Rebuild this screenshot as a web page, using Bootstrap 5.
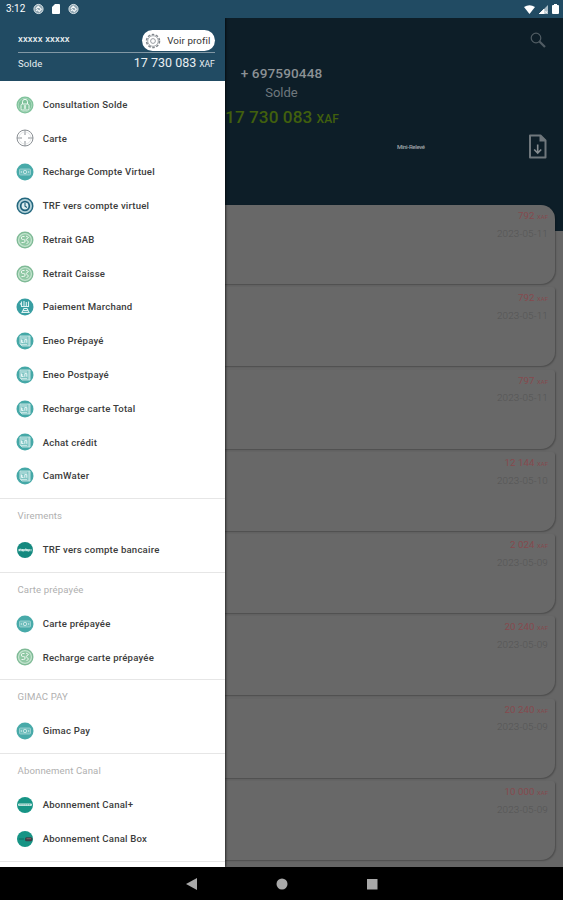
<!DOCTYPE html>
<html lang="fr">
<head>
<meta charset="utf-8">
<meta name="viewport" content="width=device-width, initial-scale=1">
<title>Compte</title>
<link href="https://cdn.jsdelivr.net/npm/bootstrap@5.3.0/dist/css/bootstrap.min.css" rel="stylesheet">
<style>
body{font-family:Roboto,"Noto Sans",sans-serif;height:900px;overflow:hidden;background:#666;line-height:1}
svg{display:block;flex:none}
.statusbar{height:18px;background:#214b63;padding:0 4px 0 6px;font-size:10px}
.screen{height:849px;overflow:hidden}
.hero{height:213px;background:#0d1e28;color:#8b9195}
.phone{font-size:13.6px;font-weight:500;letter-spacing:.1px;margin-top:49px}
.hero-label{font-size:13px;margin-top:5px;color:#6f787e}
.amount{font-size:17.2px;font-weight:500;color:#41600d;margin-top:10px;letter-spacing:.05px;padding-left:1px}
.amount small{font-size:12px}
.tools{padding:0 16px 0 397px;margin-top:8px}
.tiny{font-size:6px;font-weight:500;letter-spacing:-.35px;color:#a0a5a8;padding-top:2px}
.lookup{top:14px;right:17px}
.entries{margin-top:-26px;gap:3.25px;padding-right:8px}
.entry{height:79px;background:#686868;border-radius:0 3px 14px 0;padding:6px 7px 0 0;box-shadow:.5px 1px 1.5px rgba(0,0,0,.25)}
.entry:first-child{border-top-right-radius:14px}
.debit{font-size:9.8px;color:#854a4e}
.debit small{font-size:6px}
.day{font-size:9.8px;color:#555;margin-top:8px;font-weight:300;letter-spacing:.2px}
.drawer{top:0;left:0;width:225px;height:849px;background:#fff;box-shadow:1px 0 2px rgba(0,0,0,.6);overflow:hidden}
.drawer-head{height:63px;background:#214b63;color:#e9eff2;padding:12px 10.5px 0 18px}
.user{font-size:9.5px;font-weight:500;letter-spacing:.15px}
.profile{height:21px;width:73px;background:#fff;color:#333;font-size:9.8px;letter-spacing:.1px;padding:0 4px 0 3px}
.head-line{border-top:1px solid #8298a5;margin-top:1px}
.solde{font-size:9.5px;letter-spacing:.1px}
.total{font-size:12.5px;letter-spacing:0}
.total small{font-size:8.6px;letter-spacing:-.2px}
.menu{padding-top:6.8px}
.entry-link{height:33.78px;padding-left:15.5px;gap:9.2px;font-size:9.6px;font-weight:500;letter-spacing:.2px;color:#3c3c3c}
.group-label{height:33.78px;padding-left:17.5px;font-size:9.6px;letter-spacing:.12px;color:#b0b0b0}
.rule{height:6.2px;border-bottom:1px solid #e6e6e6}
.navbar-keys{height:33px;background:#000}
</style>
<script src="https://cdn.jsdelivr.net/npm/bootstrap@5.3.0/dist/js/bootstrap.bundle.min.js"></script>
</head>
<body>
<svg width="0" height="0" class="position-absolute">
<defs>
<symbol id="i-lock" viewBox="0 0 18 18"><circle cx="9" cy="9" r="8.5" fill="#7fc29b"/><circle cx="9" cy="9" r="6.8" fill="none" stroke="#b9dfc8" stroke-width=".7"/><g fill="none" stroke="#effaf3" stroke-width="1"><path d="M6.5 8V5.800a2.500 2.500 0 0 1 5 0V8"/><rect x="5" y="8" width="8" height="6" rx="1.5"/><path d="M9 9.300v3.400M7.800 10h2.400M7.800 12h2.400"/></g></symbol>
<symbol id="i-target" viewBox="0 0 18 18"><g fill="none" stroke="#8b9095" stroke-width="1"><circle cx="9" cy="9" r="8"/><path d="M9 1v5M9 12v5M1 9h5M12 9h5"/><circle cx="9" cy="9" r="6" stroke="#d4d6d8" stroke-width=".6"/></g></symbol>
<symbol id="i-note" viewBox="0 0 18 18"><circle cx="9" cy="9" r="8.5" fill="#48aaa9"/><rect x="3.5" y="6" width="11" height="6" rx="1" fill="#6dbdbb" stroke="#a4d6d5" stroke-width=".8"/><circle cx="9" cy="9" r="1.7" fill="none" stroke="#d5eeee" stroke-width=".8"/><path d="M5.300 8v2M12.700 8v2" stroke="#d5eeee" stroke-width=".8"/></symbol>
<symbol id="i-clock" viewBox="0 0 18 18"><circle cx="9" cy="9" r="8.5" fill="#23677e"/><circle cx="9" cy="9" r="7" fill="#b4d3da"/><circle cx="9" cy="9" r="4.3" fill="#dceef0" stroke="#1c5f79" stroke-width="1.7"/><path d="M9 6v3.300l2 1.200" fill="none" stroke="#1c5f79" stroke-width="1.1"/></symbol>
<symbol id="i-coin" viewBox="0 0 18 18"><circle cx="9" cy="9" r="7.8" fill="#c4e4cf" stroke="#7fba96" stroke-width="1.4"/><circle cx="9" cy="9" r="5.8" fill="#8fc8a4"/><g fill="none" stroke="#eef8f1" stroke-width="1"><path d="M8.500 5.500H6.800a1.500 1.500 0 0 0 0 3h.8a1.500 1.500 0 0 1 0 3H5.500M10 5l2.500 1.500-2.500 2 2.500 2.500-2 2"/></g></symbol>
<symbol id="i-shop" viewBox="0 0 18 18"><circle cx="9" cy="9" r="8.5" fill="#389ea2"/><g fill="none" stroke="#dff2f2" stroke-width="1.1"><path d="M5.500 3.500v5h7v-5M8 3v5M10.300 4v4M6 14.500l2-4h3l2 4zM7 12.600h5M4 5.500l2 1.500"/></g></symbol>
<symbol id="i-bill" viewBox="0 0 18 18"><circle cx="9" cy="9" r="8.5" fill="#45a8a7"/><g fill="none" stroke="#c9e8e7" stroke-width=".9"><path d="M4 4h10v10H6l-2-2z" fill="#80c5c3"/><path d="M13 4v10M5 6h6M5 12.500h6"/><path d="M5.500 7.500v3h2M5.500 9h1.600M8.800 10.800V7.600h2v3.200" stroke="#f0fafa"/></g></symbol>
<symbol id="i-bank" viewBox="0 0 18 18"><circle cx="9" cy="9" r="8" fill="#14897f"/><path d="M1.800 8h14.400v2.300H1.800z" fill="#6db8b1"/><path d="M3.500 10V8.200h1.700V10M6.500 8v2h1.300V8m1.200 2V8h1.400v2m1.300-2v2h1.400V8" fill="none" stroke="#e6f5f3" stroke-width=".8"/></symbol>
<symbol id="i-canal" viewBox="0 0 18 18"><circle cx="9" cy="9" r="8" fill="#169485"/><rect x="2" y="7.400" width="14" height="2.600" rx="1.200" fill="#cae9e4"/><path d="M3.500 8.800h11" stroke="#489e95" stroke-width=".8" stroke-dasharray="1.2 .7"/></symbol>
<symbol id="i-box" viewBox="0 0 18 18"><circle cx="9" cy="9" r="8" fill="#169485"/><path d="M3 9h5" stroke="#116b62"/><rect x="9" y="7.200" width="7.400" height="4" rx="1.500" fill="#3c4148"/><path d="M10.500 8.700h4.500" stroke="#a06b70" stroke-width=".8"/></symbol>
<symbol id="i-app" viewBox="0 0 12 12"><circle cx="6" cy="6" r="5" fill="#8ba2af" stroke="#e5ecef"/><path d="M3.500 5.200 5.700 3 9 6.200 6.800 8.600zM3.200 8l2-1.500" fill="none" stroke="#f4f7f8" stroke-width="1.2"/></symbol>
</defs>
</svg>

<header class="statusbar d-flex align-items-center justify-content-between text-white">
  <div class="d-flex align-items-center">
    <span>3:12</span>
    <svg class="ms-2" width="11" height="12"><use href="#i-app"/></svg>
    <svg class="ms-2" width="8" height="10" viewBox="0 0 8 10"><path d="M3 0h4a1 1 0 0 1 1 1v8a1 1 0 0 1-1 1H1a1 1 0 0 1-1-1V3z" fill="#fff"/></svg>
    <svg class="ms-2" width="11" height="12"><use href="#i-app"/></svg>
  </div>
  <div class="d-flex align-items-center gap-1">
    <svg width="11" height="9" viewBox="0 0 11 9"><path d="M0 2Q5.500-1.600 11 2L5.500 9z" fill="#fff"/></svg>
    <svg width="9" height="9" viewBox="0 0 9 9"><path d="M0 9 9 0v9z" fill="#a9bbc5"/><path d="M0 9 5 4v5zM6.300 6.200l2 2m0-2-2 2" fill="#fff" stroke="#fff" stroke-width=".8"/></svg>
    <svg width="7" height="10" viewBox="0 0 7 10"><path d="M2 0h3v1h1a1 1 0 0 1 1 1v7a1 1 0 0 1-1 1H1a1 1 0 0 1-1-1V2a1 1 0 0 1 1-1h1z" fill="#fff"/></svg>
  </div>
</header>

<main class="screen position-relative">
  <section class="hero d-flex flex-column position-relative">
    <svg class="lookup position-absolute" width="16" height="16" viewBox="0 0 16 16"><g fill="none" stroke="#505c63"><circle cx="6" cy="6" r="4.800" stroke-width="1.200"/><path d="m9.500 9.500 5.500 5.500" stroke-width="2.200"/></g></svg>
    <div class="phone text-center">+ 697590448</div>
    <div class="hero-label text-center">Solde</div>
    <div class="amount text-center">17 730 083 <small>XAF</small></div>
    <div class="tools d-flex align-items-center justify-content-between">
      <span class="tiny">Mini-Relevé</span>
      <svg width="19" height="25" viewBox="0 0 19 25"><path d="M2 1.500h10.500l5 5V23.500H2z" fill="none" stroke="#6f777c" stroke-width="2" stroke-linejoin="round"/><path d="M11.500 1v6.500h6.500z" fill="#6f777c"/><path d="M9.700 10.500v8.300M6.200 15.500l3.500 3.500 3.500-3.500" fill="none" stroke="#858c90" stroke-width="1.600"/></svg>
    </div>
  </section>
  <section class="entries d-flex flex-column position-relative text-end">
    <div class="entry"><div class="debit">792 <small>XAF</small></div><div class="day">2023-05-11</div></div>
    <div class="entry"><div class="debit">792 <small>XAF</small></div><div class="day">2023-05-11</div></div>
    <div class="entry"><div class="debit">797 <small>XAF</small></div><div class="day">2023-05-11</div></div>
    <div class="entry"><div class="debit">12 144 <small>XAF</small></div><div class="day">2023-05-10</div></div>
    <div class="entry"><div class="debit">2 024 <small>XAF</small></div><div class="day">2023-05-09</div></div>
    <div class="entry"><div class="debit">20 240 <small>XAF</small></div><div class="day">2023-05-09</div></div>
    <div class="entry"><div class="debit">20 240 <small>XAF</small></div><div class="day">2023-05-09</div></div>
    <div class="entry"><div class="debit">10 000 <small>XAF</small></div><div class="day">2023-05-09</div></div>
  </section>

  <aside class="drawer position-absolute">
    <div class="drawer-head">
      <div class="d-flex justify-content-between">
        <span class="user pt-1">xxxxx xxxxx</span>
        <span class="profile rounded-pill d-flex align-items-center justify-content-between">
          <svg width="16" height="16" viewBox="0 0 16 16"><g fill="none" stroke="#81878d"><circle cx="8" cy="8" r="6.500" stroke-width="1.500" stroke-dasharray="2.600 1.480"/><circle cx="8" cy="8" r="5.300" stroke-width=".7"/><circle cx="8" cy="8" r="2.400" stroke-width=".8"/></g></svg>
          Voir profil
        </span>
      </div>
      <div class="head-line"></div>
      <div class="d-flex justify-content-between align-items-center pt-1">
        <span class="solde">Solde</span>
        <span class="total">17 730 083 <small>XAF</small></span>
      </div>
    </div>
    <nav class="menu">
      <div class="entry-link d-flex align-items-center"><svg width="18" height="18"><use href="#i-lock"/></svg>Consultation Solde</div>
      <div class="entry-link d-flex align-items-center"><svg width="18" height="18"><use href="#i-target"/></svg>Carte</div>
      <div class="entry-link d-flex align-items-center"><svg width="18" height="18"><use href="#i-note"/></svg>Recharge Compte Virtuel</div>
      <div class="entry-link d-flex align-items-center"><svg width="18" height="18"><use href="#i-clock"/></svg>TRF vers compte virtuel</div>
      <div class="entry-link d-flex align-items-center"><svg width="18" height="18"><use href="#i-coin"/></svg>Retrait GAB</div>
      <div class="entry-link d-flex align-items-center"><svg width="18" height="18"><use href="#i-coin"/></svg>Retrait Caisse</div>
      <div class="entry-link d-flex align-items-center"><svg width="18" height="18"><use href="#i-shop"/></svg>Paiement Marchand</div>
      <div class="entry-link d-flex align-items-center"><svg width="18" height="18"><use href="#i-bill"/></svg>Eneo Prépayé</div>
      <div class="entry-link d-flex align-items-center"><svg width="18" height="18"><use href="#i-bill"/></svg>Eneo Postpayé</div>
      <div class="entry-link d-flex align-items-center"><svg width="18" height="18"><use href="#i-bill"/></svg>Recharge carte Total</div>
      <div class="entry-link d-flex align-items-center"><svg width="18" height="18"><use href="#i-bill"/></svg>Achat crédit</div>
      <div class="entry-link d-flex align-items-center"><svg width="18" height="18"><use href="#i-bill"/></svg>CamWater</div>
      <div class="rule"></div>
      <div class="group-label d-flex align-items-center">Virements</div>
      <div class="entry-link d-flex align-items-center"><svg width="18" height="18"><use href="#i-bank"/></svg>TRF vers compte bancaire</div>
      <div class="rule"></div>
      <div class="group-label d-flex align-items-center">Carte prépayée</div>
      <div class="entry-link d-flex align-items-center"><svg width="18" height="18"><use href="#i-note"/></svg>Carte prépayée</div>
      <div class="entry-link d-flex align-items-center"><svg width="18" height="18"><use href="#i-coin"/></svg>Recharge carte prépayée</div>
      <div class="rule"></div>
      <div class="group-label d-flex align-items-center">GIMAC PAY</div>
      <div class="entry-link d-flex align-items-center"><svg width="18" height="18"><use href="#i-note"/></svg>Gimac Pay</div>
      <div class="rule"></div>
      <div class="group-label d-flex align-items-center">Abonnement Canal</div>
      <div class="entry-link d-flex align-items-center"><svg width="18" height="18"><use href="#i-canal"/></svg>Abonnement Canal+</div>
      <div class="entry-link d-flex align-items-center"><svg width="18" height="18"><use href="#i-box"/></svg>Abonnement Canal Box</div>
      <div class="rule"></div>
    </nav>
  </aside>
</main>

<footer class="navbar-keys d-flex justify-content-center align-items-center">
  <svg width="192" height="14" viewBox="0 0 192 14"><g fill="#a9a9a9"><path d="M11 1v12L0 7z"/><circle cx="96" cy="7" r="5.500"/><path d="M181 2h10.500v10.500H181z"/></g></svg>
</footer>
</body>
</html>
